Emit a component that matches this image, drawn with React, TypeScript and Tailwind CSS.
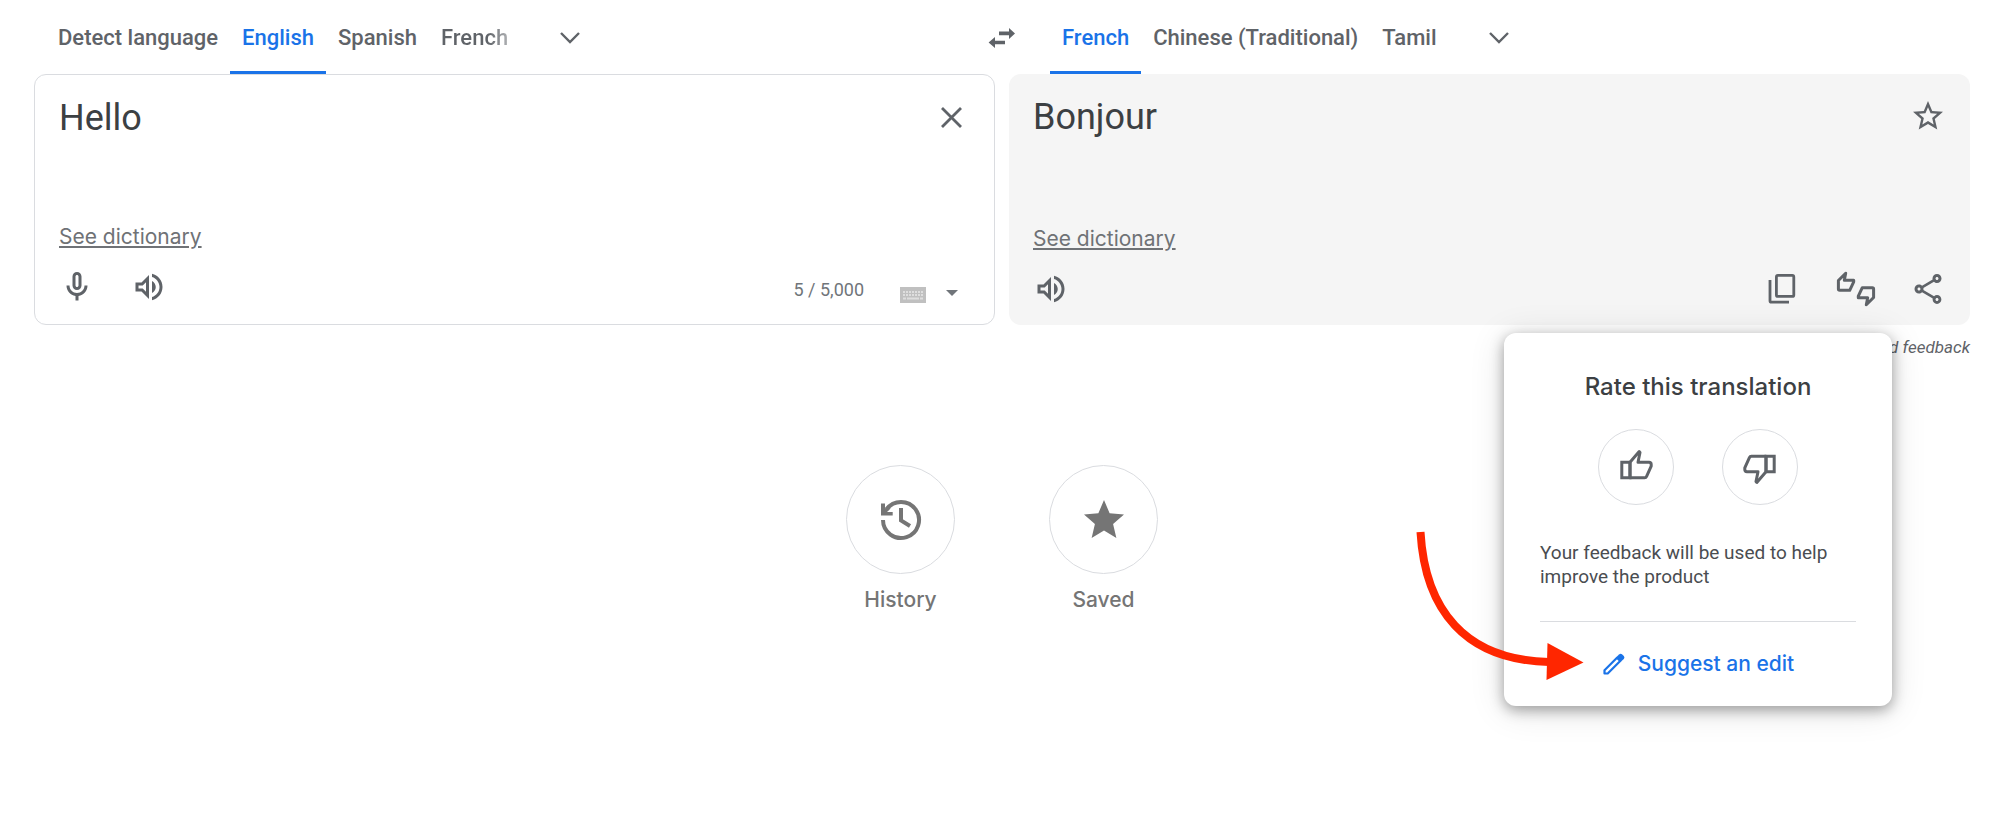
import { useState } from "react";
import type { ReactNode } from "react";
import { MdOutlineShare, MdStar, MdStarBorder } from "react-icons/md";

interface LanguageTabsProps {
	label: string;
	languages: string[];
	initial: string;
	fadeLast?: boolean;
}

interface IconButtonProps {
	label: string;
	children: ReactNode;
}

interface RoundLinkProps {
	href: string;
	label: string;
	children: ReactNode;
}

function VolumeIcon() {
	return (
		<svg viewBox="0 0 24 24" className="size-9 fill-current" aria-hidden="true">
			<path d="M3 9v6h4l5 5V4L7 9H3zm7-.17v6.34L7.83 13H5v-2h2.83L10 8.83zM16.5 12c0-1.77-1.02-3.29-2.5-4.03v8.05c1.48-.73 2.5-2.25 2.5-4.02zM14 3.23v2.06c2.89.86 5 3.54 5 6.71s-2.11 5.85-5 6.71v2.06c4.01-.91 7-4.49 7-8.77s-2.99-7.86-7-8.77z" />
		</svg>
	);
}

function MicIcon() {
	return (
		<svg viewBox="0 0 24 24" className="size-9 fill-current" aria-hidden="true">
			<path d="M12 14c1.66 0 3-1.34 3-3V5c0-1.66-1.34-3-3-3S9 3.34 9 5v6c0 1.66 1.34 3 3 3zm-1-9c0-.55.45-1 1-1s1 .45 1 1v6c0 .55-.45 1-1 1s-1-.45-1-1V5zm6 6c0 2.76-2.24 5-5 5s-5-2.24-5-5H5c0 3.53 2.61 6.43 6 6.92V21h2v-3.08c3.39-.49 6-3.39 6-6.92h-2z" />
		</svg>
	);
}

function ChevronIcon() {
	return (
		<svg viewBox="0 0 36 36" className="size-9" aria-hidden="true">
			<path
				d="M9 14l9 9 9-9"
				fill="none"
				stroke="currentColor"
				strokeWidth="2.4"
			/>
		</svg>
	);
}

function SwapIcon() {
	return (
		<svg viewBox="0 0 36 36" className="size-9 fill-current" aria-hidden="true">
			<path d="M15 12.5h10V9l6 5.5-6 5.5v-3.8H15zM21 21.8H11V18l-6.4 5.5L11 29v-3.7h10z" />
		</svg>
	);
}

function CopyIcon() {
	return (
		<svg viewBox="0 0 36 36" className="size-9" aria-hidden="true">
			<g fill="none" stroke="currentColor" strokeWidth="2.8">
				<rect x="10.4" y="4.4" width="17.4" height="21" rx="1.5" />
				<path d="M4 9v20.7q0 1.5 1.5 1.5H23" />
			</g>
		</svg>
	);
}

function ThumbsUpDownIcon() {
	const thumb = "M9.7 3.2L2.4 10.5V19q0 1.3 1.3 1.3h10l4-8.5v-1.5H8.3z";

	return (
		<svg
			viewBox="0 0 40 38"
			className="h-[38px] w-10 shrink-0"
			aria-hidden="true"
		>
			<g
				fill="none"
				stroke="currentColor"
				strokeWidth="3"
				strokeLinejoin="round"
			>
				<path d={thumb} />
				<path d={thumb} transform="rotate(180 20 19)" />
			</g>
		</svg>
	);
}

function ThumbIcon({ down = false }: { down?: boolean }) {
	return (
		<svg
			viewBox="0 0 36 36"
			className={down ? "size-9 rotate-180" : "size-9"}
			aria-hidden="true"
		>
			<g fill="none" stroke="currentColor" strokeWidth="3">
				<path d="M3.8 13.2H12v15.6H3.8z" />
				<path
					d="M12 13.2L21.2 2.6l.8.9-2 9.7h11q2.2 0 2.2 2.2v1.8l-4.6 10.2q-.6 1.4-2 1.4H12z"
					strokeLinejoin="round"
				/>
			</g>
		</svg>
	);
}

function HistoryIcon() {
	return (
		<svg viewBox="0 0 48 48" className="size-12" aria-hidden="true">
			<g fill="none" stroke="currentColor" strokeWidth="4">
				<path d="M6 24a18 18 0 1 0 3.5-10.7" />
				<path d="M24 12v12.5l9 5.5" />
			</g>
			<path
				d="M4 7.5h4v5L11 10l2.500 2.500-3.500 3.500h5.700v3.500H4z"
				fill="currentColor"
			/>
		</svg>
	);
}

function KeyboardIcon() {
	return (
		<svg viewBox="0 0 26 16" className="h-4 w-[26px]" aria-hidden="true">
			<rect width="26" height="16" fill="#c0c0c0" />
			<path
				d="M3 5h20M3 8h20"
				stroke="#dedede"
				strokeWidth="2"
				strokeDasharray="2 1"
			/>
			<path d="M3 11.5h3M7 11.5h12M20 11.5h3" stroke="#dedede" strokeWidth="2" />
		</svg>
	);
}

function PencilIcon() {
	return (
		<svg viewBox="0 0 24 24" className="size-6" aria-hidden="true">
			<path
				d="M2.5 21.5v-3.2L15 5.8l3.2 3.2L5.7 21.5z"
				fill="none"
				stroke="currentColor"
				strokeWidth="2.2"
				strokeLinejoin="round"
			/>
			<path
				d="M14.2 5.2l2.8-2.8q1.5-1.3 3-.2l1.8 1.8q1.3 1.5 0 3L18.8 9.8z"
				fill="currentColor"
			/>
		</svg>
	);
}

function IconButton({ label, children }: IconButtonProps) {
	return (
		<button
			type="button"
			aria-label={label}
			className="flex size-9 shrink-0 cursor-pointer items-center justify-center text-[#5f6368]"
		>
			{children}
		</button>
	);
}

function LanguageTabs({
	label,
	languages,
	initial,
	fadeLast = false,
}: LanguageTabsProps) {
	const [active, setActive] = useState(initial);

	return (
		<nav aria-label={label} className="flex items-center">
			{languages.map((lang, i) => (
				<button
					key={lang}
					type="button"
					onClick={() => setActive(lang)}
					className={`h-[74px] cursor-pointer border-b-[3px] px-3 pt-1 text-[22px] font-medium whitespace-nowrap ${
						lang === active
							? "border-[#1a73e8] text-[#1a73e8]"
							: "border-transparent text-[#5f6368]"
					}`}
				>
					{fadeLast && i === languages.length - 1 ? (
						<span className="bg-linear-to-r from-[#5f6368] from-70% to-[#b0b2b5] bg-clip-text text-transparent">
							{lang}
						</span>
					) : (
						lang
					)}
				</button>
			))}
			<div className="ml-8">
				<IconButton label="More languages">
					<ChevronIcon />
				</IconButton>
			</div>
		</nav>
	);
}

function DictionaryLink() {
	return (
		<a
			href="#dictionary"
			className="self-start font-[Inter,sans-serif] text-[21px] leading-6 text-[#6f7276] underline underline-offset-2"
		>
			See dictionary
		</a>
	);
}

function SourcePanel() {
	const [text, setText] = useState("Hello");

	return (
		<section className="flex flex-col rounded-xl border border-[#dadce0] px-6 pt-5 pb-4">
			<div className="flex items-start">
				<textarea
					aria-label="Source text"
					value={text}
					onChange={(e) => setText(e.target.value)}
					className="h-[130px] flex-1 resize-none text-[36px] leading-[46px] text-[#3c4043] outline-none"
				/>
				<div className="pt-1">
					<IconButton label="Clear source text">
						<svg viewBox="0 0 36 36" className="size-9" aria-hidden="true">
							<path
								d="M8 9l19 19M27 9l-19 19"
								stroke="currentColor"
								strokeWidth="2.8"
							/>
						</svg>
					</IconButton>
				</div>
			</div>
			<DictionaryLink />
			<div className="mt-5 flex items-center">
				<IconButton label="Translate by voice">
					<MicIcon />
				</IconButton>
				<div className="ml-9">
					<IconButton label="Listen to source text">
						<VolumeIcon />
					</IconButton>
				</div>
				<span className="mt-1 ml-auto text-[18px] text-[#70757a]">
					5 / 5,000
				</span>
				<button
					type="button"
					aria-label="Input tools"
					className="mt-4 ml-9 flex cursor-pointer items-center gap-5 pr-3"
				>
					<KeyboardIcon />
					<svg viewBox="0 0 12 6" className="mb-1 h-[6px] w-3" aria-hidden="true">
						<path d="M0 0h12L6 6z" fill="#70757a" />
					</svg>
				</button>
			</div>
		</section>
	);
}

function RatePopup() {
	return (
		<div
			role="dialog"
			aria-label="Rate this translation"
			className="absolute top-full right-[78px] mt-2 w-[388px] rounded-xl bg-white px-9 pt-9 pb-6 shadow-[0_4px_14px_rgba(0,0,0,0.35),0_4px_36px_rgba(0,0,0,0.12)]"
		>
			<h2 className="text-center font-[Inter,sans-serif] text-[24px] leading-9 font-medium text-[#3c4043]">
				Rate this translation
			</h2>
			<div className="mt-6 flex justify-center gap-12">
				<button
					type="button"
					aria-label="Good translation"
					className="flex size-19 cursor-pointer items-center justify-center rounded-full border border-[#dadce0] text-[#5f6368]"
				>
					<ThumbIcon />
				</button>
				<button
					type="button"
					aria-label="Poor translation"
					className="flex size-19 cursor-pointer items-center justify-center rounded-full border border-[#dadce0] text-[#5f6368]"
				>
					<ThumbIcon down />
				</button>
			</div>
			<p className="mt-9 text-[19px] leading-6 text-[#4a4d51]">
				Your feedback will be used to help improve the product
			</p>
			<hr className="mt-8 border-[#dadce0]" />
			<button
				type="button"
				className="mx-auto mt-6 flex cursor-pointer items-center gap-3 font-[Inter,sans-serif] text-[21px] leading-9 font-medium text-[#1a73e8]"
			>
				<PencilIcon />
				Suggest an edit
			</button>

			{/* Pointer to the edit action */}
			<svg
				viewBox="0 0 168 152"
				className="pointer-events-none absolute top-[197px] -left-[86px] h-[152px] w-[168px] overflow-visible"
				aria-hidden="true"
			>
				<path
					d="M2.5 2C7 80 47 130 131 132"
					fill="none"
					stroke="#ff2600"
					strokeWidth="8"
				/>
				<path d="M129.5 113l36 19.5-37 17.5z" fill="#ff2600" />
			</svg>
		</div>
	);
}

function TargetPanel() {
	return (
		<section className="relative flex flex-col rounded-xl bg-[#f5f5f5] px-6 pt-5 pb-[18px]">
			<div className="flex h-[133px] items-start justify-between">
				<p className="text-[36px] leading-[46px] text-[#3c4043]">Bonjour</p>
				<div className="pt-1">
					<IconButton label="Save translation">
						<MdStarBorder className="size-9" />
					</IconButton>
				</div>
			</div>
			<DictionaryLink />
			<div className="mt-5 flex items-center">
				<IconButton label="Listen to translation">
					<VolumeIcon />
				</IconButton>
				<div className="ml-auto flex gap-9">
					<IconButton label="Copy translation">
						<CopyIcon />
					</IconButton>
					<IconButton label="Rate this translation">
						<ThumbsUpDownIcon />
					</IconButton>
					<IconButton label="Share translation">
						<MdOutlineShare className="size-9" />
					</IconButton>
				</div>
			</div>
			<RatePopup />
		</section>
	);
}

function RoundLink({ href, label, children }: RoundLinkProps) {
	return (
		<a
			href={href}
			className="flex w-[109px] flex-col items-center gap-2 font-[Inter,sans-serif] text-[21px] leading-9 font-medium text-[#757575]"
		>
			<span className="flex size-[109px] items-center justify-center rounded-full border border-[#dadce0]">
				{children}
			</span>
			{label}
		</a>
	);
}

export default function App() {
	return (
		<main className="min-h-screen bg-white pr-[29px] pl-[34px] font-[Roboto,sans-serif]">
			<header className="grid grid-cols-[1fr_96px_1fr] items-center">
				<div className="pl-3">
					<LanguageTabs
						label="Source language"
						languages={["Detect language", "English", "Spanish", "French"]}
						initial="English"
						fadeLast
					/>
				</div>
				<div className="flex justify-center">
					<IconButton label="Swap languages">
						<SwapIcon />
					</IconButton>
				</div>
				<LanguageTabs
					label="Target language"
					languages={["French", "Chinese (Traditional)", "Tamil"]}
					initial="French"
				/>
			</header>

			<div className="grid grid-cols-2 gap-[14px]">
				<SourcePanel />
				<TargetPanel />
			</div>

			<div className="flex justify-end pt-3">
				<a href="#feedback" className="text-[17px] leading-5 text-[#5f6368] italic">
					Send feedback
				</a>
			</div>

			<div className="mt-27 flex justify-center gap-[94px]">
				<RoundLink href="#history" label="History">
					<HistoryIcon />
				</RoundLink>
				<RoundLink href="#saved" label="Saved">
					<MdStar className="size-12" />
				</RoundLink>
			</div>
		</main>
	);
}
